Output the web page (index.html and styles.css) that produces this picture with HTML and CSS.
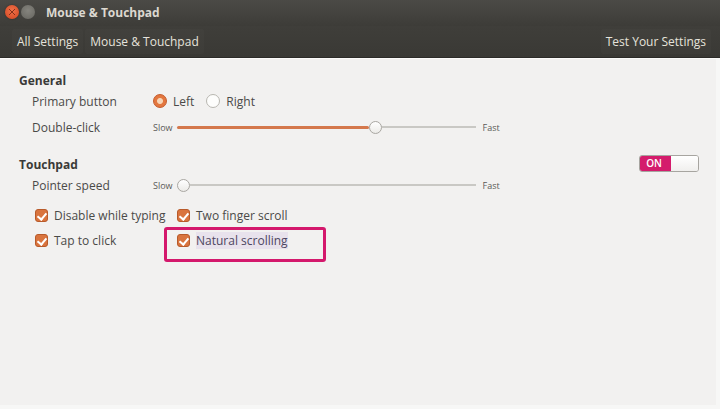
FILE: index.html
```html
<!DOCTYPE html>
<html lang="en">
<head>
<meta charset="utf-8">
<title>Mouse &amp; Touchpad</title>
<link rel="stylesheet" href="styles.css">
</head>
<body>
<div class="window">
  <header class="titlebar">
    <span class="wbtn close"></span>
    <span class="wbtn min"></span>
    <span class="title">Mouse &amp; Touchpad</span>
  </header>
  <nav class="toolbar">
    <div class="crumbs">
      <span class="tbtn">All Settings</span>
      <span class="tbtn">Mouse &amp; Touchpad</span>
    </div>
    <span class="tbtn">Test Your Settings</span>
  </nav>
  <main class="content">
    <section class="group">
      <div class="heading"><h2>General</h2></div>
      <div class="row">
        <span class="label">Primary button</span>
        <div class="ctrl radios">
          <label class="radio on"><span class="dot"></span>Left</label>
          <label class="radio"><span class="dot"></span>Right</label>
        </div>
      </div>
      <div class="row row-gap">
        <span class="label">Double-click</span>
        <div class="ctrl slider">
          <span class="end">Slow</span>
          <div class="track">
            <div class="fill" style="width: 192px"></div>
            <span class="thumb"></span>
            <div class="rest"></div>
          </div>
          <span class="end">Fast</span>
        </div>
      </div>
    </section>

    <section class="group touchpad">
      <div class="heading">
        <h2>Touchpad</h2>
        <div class="switch"><span class="on">ON</span><span class="off"></span></div>
      </div>
      <div class="row">
        <span class="label">Pointer speed</span>
        <div class="ctrl slider">
          <span class="end">Slow</span>
          <div class="track">
            <div class="fill" style="width: 0px"></div>
            <span class="thumb"></span>
            <div class="rest"></div>
          </div>
          <span class="end">Fast</span>
        </div>
      </div>
      <div class="checks">
        <label class="check"><span class="box"></span>Disable while typing</label>
        <label class="check"><span class="box"></span>Two finger scroll</label>
        <label class="check"><span class="box"></span>Tap to click</label>
        <label class="check marked"><span class="box"></span><span class="sel">Natural scrolling</span></label>
      </div>
    </section>
  </main>
</div>
</body>
</html>
```

FILE: styles.css
```css
* { box-sizing: border-box; }

html, body {
  margin: 0;
  height: 100%;
}

body {
  background: #f2f1f0;
  font-family: "Open Sans", "Noto Sans", sans-serif;
  font-size: 12px;
  color: #4a4a48;
}

.window {
  height: 409px;
  display: flex;
  flex-direction: column;
}

/* window decorations */
.titlebar {
  height: 26px;
  background: linear-gradient(#4b4a46, #3d3c38);
  display: flex;
  align-items: center;
  padding-left: 5px;
}

.wbtn {
  width: 14px;
  height: 14px;
  border-radius: 50%;
  margin-top: -2px;
}

.wbtn.close {
  background: radial-gradient(circle at 50% 40%, #f0724a, #d2441f);
  box-shadow: 0 0 2px rgba(0,0,0,.4);
  position: relative;
}

.wbtn.close::after {
  content: "";
  position: absolute;
  left: 4px; top: 4px;
  width: 6px; height: 6px;
  background:
    linear-gradient(45deg, transparent 42%, #5a1a0a 42%, #5a1a0a 58%, transparent 58%),
    linear-gradient(-45deg, transparent 42%, #5a1a0a 42%, #5a1a0a 58%, transparent 58%);
  opacity: .7;
}

.wbtn.min {
  margin-left: 2px;
  background: radial-gradient(circle at 50% 40%, #85847e, #66655f);
}

.title {
  margin-left: 11px;
  margin-top: -2px;
  font-weight: 700;
  font-size: 12px;
  color: #dcd8d0;
}

.toolbar {
  height: 32px;
  background: linear-gradient(#3f3e3a, #3a3935);
  display: flex;
  align-items: center;
  justify-content: space-between;
  padding: 0 9px 0 12px;
  border-bottom: 1px solid #2c2b28;
}

.crumbs {
  display: flex;
  gap: 2px;
}

.tbtn {
  color: #e6e3dc;
  font-size: 12px;
  padding: 4px 5px;
  border-radius: 2px;
  background: rgba(255,255,255,.015);
}

/* settings panel */
.content {
  flex: 1;
  border-top: 1px solid #fbfbfa;
  border-right: 4px solid #f7f7f6;
  border-bottom: 4px solid #f7f7f6;
  padding: 11px 0 0 19px;
}

.heading {
  height: 20px;
  display: flex;
  align-items: center;
  justify-content: space-between;
  padding-right: 17px;
}

h2 {
  margin: 0;
  font-size: 12px;
  font-weight: 700;
  color: #3a3a38;
}

.row {
  height: 22px;
  display: flex;
  align-items: center;
  padding-left: 13px;
}

.row-gap { margin-top: 4px; }

.label {
  width: 121px;
  flex: none;
}

.ctrl {
  display: flex;
  align-items: center;
}

/* radio buttons */
.radios { gap: 12px; }

.radio {
  display: flex;
  align-items: center;
  gap: 6px;
}

.dot {
  width: 14px;
  height: 14px;
  border-radius: 50%;
  border: 1px solid #b8b6b0;
  background: #fdfdfc;
}

.radio.on .dot {
  border-color: #c45a2a;
  background: radial-gradient(circle, #f7d6b8 0 2.5px, #e3773f 3.5px);
}

/* sliders */
.slider { font-size: 9px; color: #5a5a58; }

.track {
  width: 299px;
  margin: 0 7px 0 4px;
  display: flex;
  align-items: center;
}

.fill {
  height: 3px;
  background: #d4784c;
  border-radius: 2px;
}

.rest {
  flex: 1;
  height: 2px;
  background: #c9c8c4;
}

.thumb {
  width: 13px;
  height: 13px;
  flex: none;
  border-radius: 50%;
  border: 1px solid #a9a7a2;
  background: linear-gradient(#ffffff, #ecebe8);
}

.touchpad { margin-top: 16px; }

/* on/off switch */
.switch {
  width: 60px;
  height: 17px;
  display: flex;
  border-radius: 3px;
  overflow: hidden;
  border: 1px solid #a7a5a0;
  margin-top: -2px;
}

.switch .on {
  width: 31px;
  background: #d41c6c;
  color: #fff;
  font-size: 10px;
  font-weight: 600;
  display: flex;
  align-items: center;
  justify-content: center;
  padding-right: 3px;
}

.switch .off {
  flex: 1;
  background: linear-gradient(#ffffff, #f0efed);
}

/* check boxes */
.checks {
  display: grid;
  grid-template-columns: 142px 160px;
  grid-auto-rows: 22px;
  row-gap: 3px;
  margin-top: 8px;
  padding-left: 16px;
}

.check {
  display: flex;
  align-items: center;
  gap: 6px;
  position: relative;
}

.box {
  width: 13px;
  height: 13px;
  border-radius: 3px;
  background: #d9743e;
  border: 1px solid #b85a2a;
  position: relative;
  flex: none;
}

.box::after {
  content: "";
  position: absolute;
  left: 3px;
  top: 1px;
  width: 4px;
  height: 7px;
  border: solid #fff;
  border-width: 0 2px 2px 0;
  transform: rotate(40deg);
}

.sel {
  background: #e8e2ec;
  color: #4d4660;
}

/* highlight frame drawn over the last option */
.check.marked::before {
  content: "";
  box-sizing: border-box;
  position: absolute;
  left: -13px;
  top: -2px;
  width: 162px;
  height: 35px;
  border: 3px solid #d4186c;
  border-radius: 3px;
}
```
